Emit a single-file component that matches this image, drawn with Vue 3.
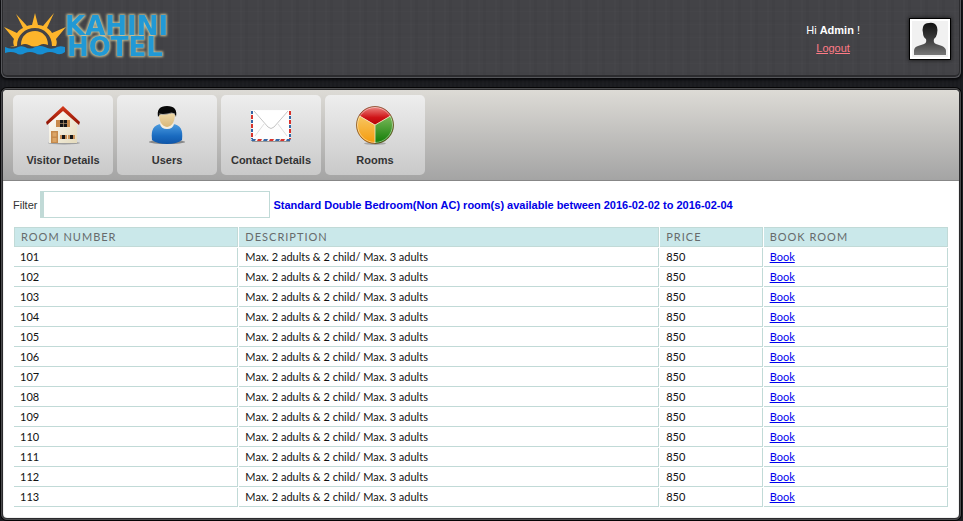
<script setup>
import { ref, computed } from 'vue'

const filter = ref('')
const rooms = Array.from({ length: 13 }, (_, i) => ({
  number: 101 + i,
  description: 'Max. 2 adults & 2 child/ Max. 3 adults',
  price: 850
}))
const shown = computed(() =>
  rooms.filter(r => `${r.number} ${r.description} ${r.price}`.toLowerCase().includes(filter.value.toLowerCase()))
)
</script>

<template>
  <div class="page">
    <header class="top">
      <a class="brand" href="#" aria-label="Kahini Hotel">
        <svg width="176" height="58" viewBox="0 0 176 58">
          <defs>
            <filter id="glow" x="-10%" y="-20%" width="120%" height="140%" color-interpolation-filters="sRGB">
              <feMorphology in="SourceAlpha" operator="dilate" radius="1" />
              <feGaussianBlur stdDeviation="1" result="b" />
              <feFlood flood-color="#c4c09a" />
              <feComposite in2="b" operator="in" result="g" />
              <feMerge><feMergeNode in="g" /><feMergeNode in="SourceGraphic" /></feMerge>
            </filter>
          </defs>
          <g transform="translate(-1 0)">
            <path fill="#fdb52b" d="M10 39 L9 39 L13 38 C12 35 12 33 13 31 L3 19 L16 25 C18 22 20 21 22 20 L15 6 L26 18 C28 17 30 17 31 17 L34 5 L37 17 C38 17 40 17 42 18 L53 5 L46 20 C48 21 50 23 51 25 L65 19 L55 31 C56 33 56 36 55 38 L51 38 C51 27 43 20 34 20 C24 20 16 27 16 38 Z" />
            <path fill="#fdb52b" d="M20 37 C20 28 26 23 34 23 C41 23 47 28 47 37 Q42 35 39 37 Q33 40 28 37 Q24 35 20 37 Z" />
            <path fill="#178fd3" d="M4 39 Q10 42 15 40 Q19 37 24 39 Q29 42 34 39 Q39 37 44 39 Q49 42 54 40 Q58 37 64 39 L64 44 Q59 48 54 45 Q49 43 44 45 Q39 48 34 45 Q29 43 24 45 Q19 48 15 45 Q10 43 4 45 Z" />
          </g>
          <g class="logo-text" filter="url(#glow)">
            <text x="63" y="27">KAHINI</text>
            <text x="65" y="48">HOTEL</text>
          </g>
        </svg>
      </a>
      <div class="account">
        <p class="greet">Hi <b>Admin</b> !<br /><a href="#">Logout</a></p>
        <svg class="avatar" width="42" height="42" viewBox="0 0 42 42" role="img" aria-label="Admin">
          <defs>
            <linearGradient id="man" x1="0" y1="0" x2="0" y2="1">
              <stop offset="0" stop-color="#111" />
              <stop offset=".6" stop-color="#444" />
              <stop offset="1" stop-color="#777" />
            </linearGradient>
          </defs>
          <rect width="42" height="42" fill="#000" />
          <rect x="1" y="1" width="40" height="40" fill="#fff" />
          <rect x="3" y="3" width="36" height="36" fill="#f1f1f1" />
          <path fill="url(#man)" d="M5 37 V33 Q5 29 9 28 L15 26 Q18 25 17 21 Q14 19 14 15 Q13 12 14 9 Q15 5 20 5 Q26 4 28 9 Q29 12 28 16 Q27 20 25 21 Q24 25 27 26 L33 28 Q37 30 37 33 V37 Z" />
        </svg>
      </div>
    </header>

    <main class="panel">
      <nav class="nav">
        <a class="tile" href="#">
          <svg width="40" height="40" viewBox="0 0 40 40">
            <defs>
              <linearGradient id="wall" x1="0" y1="0" x2="1" y2="1">
                <stop offset="0" stop-color="#fff" /><stop offset="1" stop-color="#e4dabb" />
              </linearGradient>
              <linearGradient id="roof" x1="0" y1="0" x2="0" y2="1">
                <stop offset="0" stop-color="#d63a1c" /><stop offset="1" stop-color="#8d1405" />
              </linearGradient>
            </defs>
            <ellipse cx="21" cy="38" rx="16" ry="1.500" fill="#777" opacity=".6" />
            <path d="M6 16 L20 4 L34 16 V38 H6 Z" fill="url(#wall)" />
            <path d="M20 1 L37 17 L36 20 L20 6 L4 20 L3 17 Z" fill="url(#roof)" />
            <path d="M13 15 h14 v7 h-14z" fill="#c88a4b" />
            <path d="M17 15 h7 v7 h-7z" fill="#151515" />
            <path d="M20.500 15v7M17 18.500h7" stroke="#c9a77b" stroke-width=".6" />
            <path d="M8 26 h7 v12 h-7z" fill="#c58a4c" />
            <path d="M9.500 27.500h4v4h-4zM9.500 33h4v4h-4z" fill="#dba566" />
            <path d="M17 30h7v4h-7zM25 30h7v4h-7z" fill="#cb9157" />
            <path d="M19 30h3v4h-3zM27 30h3v4h-3z" fill="#151515" />
          </svg>
          <span>Visitor Details</span>
        </a>
        <a class="tile" href="#">
          <svg width="40" height="40" viewBox="0 0 40 40">
            <defs>
              <linearGradient id="shirt" x1="0" y1="0" x2="0" y2="1">
                <stop offset="0" stop-color="#4b9bdf" /><stop offset=".6" stop-color="#1a6bc0" /><stop offset="1" stop-color="#0e55a8" />
              </linearGradient>
              <linearGradient id="face" x1="0" y1="0" x2="0" y2="1">
                <stop offset="0" stop-color="#efd9a8" /><stop offset="1" stop-color="#d8b778" />
              </linearGradient>
            </defs>
            <ellipse cx="20" cy="37" rx="18" ry="2" fill="#555" opacity=".6" />
            <path d="M5 35 Q3 20 14 19 H26 Q37 20 35 35 Q30 39 20 39 Q10 39 5 35Z" fill="url(#shirt)" />
            <path d="M13 19 Q14 24 20 24 Q26 24 27 19 L24 17 H16Z" fill="#f4eee0" />
            <path d="M12 8 Q12 21 20 22 Q28 21 28 8Z" fill="url(#face)" />
            <path d="M11 12 Q9 1 20 1 Q31 1 29 12 Q28 8 25 8 Q20 10 14 9 Q12 10 11 12Z" fill="#080808" />
            <path d="M12 9 Q16 10 20 9 Q25 7 28 9" fill="none" stroke="#aaa" stroke-width=".8" />
          </svg>
          <span>Users</span>
        </a>
        <a class="tile" href="#">
          <svg width="40" height="40" viewBox="0 0 40 40">
            <path d="M1 36 H39" stroke="#555" stroke-width="2" opacity=".5" />
            <rect x="0" y="5" width="40" height="31" fill="#f6f6f6" />
            <path d="M1 10V34M39 6V34" stroke="#d8322b" stroke-width="2" stroke-dasharray="4 5" />
            <path d="M1 6V34M39 11V34" stroke="#3467a5" stroke-width="2" stroke-dasharray="3 6" />
            <path d="M0 36l1-2h4l-1 2zM12 36l1-2h4l-1 2zM24 36l1-2h4l-1 2zM35 36l1-2h4l-1 2z" fill="#3467a5" />
            <path d="M6 36l1-2h4l-1 2zM18 36l1-2h4l-1 2zM29 36l1-2h4l-1 2z" fill="#d8322b" />
            <rect x="2" y="5" width="36" height="29" fill="#fdfdfd" />
            <path d="M4 31 L13 19 M27 19 L36 31" fill="none" stroke="#ddd" />
            <path d="M3 6 L17 22 Q20 25 23 22 L37 6" fill="#fff" stroke="#c4c4c4" />
          </svg>
          <span>Contact Details</span>
        </a>
        <a class="tile" href="#">
          <svg width="40" height="40" viewBox="0 0 40 40">
            <defs>
              <linearGradient id="red" x1="0" y1="0" x2="0" y2="1">
                <stop offset="0" stop-color="#ee8a84" /><stop offset=".6" stop-color="#cf1418" /><stop offset="1" stop-color="#b40006" />
              </linearGradient>
              <linearGradient id="orange" x1="0" y1="0" x2="0" y2="1">
                <stop offset="0" stop-color="#f7c763" /><stop offset="1" stop-color="#f59a0b" />
              </linearGradient>
              <linearGradient id="green" x1="0" y1="0" x2="0" y2="1">
                <stop offset="0" stop-color="#7bb95a" /><stop offset="1" stop-color="#107c05" />
              </linearGradient>
            </defs>
            <ellipse cx="20" cy="38.500" rx="11" ry="1.500" fill="#777" opacity=".5" />
            <path d="M20 20 L4 10.500 A18.500 18.500 0 0 1 36 10.500Z" fill="url(#red)" />
            <path d="M20 20 V38.500 A18.500 18.500 0 0 1 4 10.500Z" fill="url(#orange)" />
            <path d="M20 20 L36 10.500 A18.500 18.500 0 0 1 20 38.500Z" fill="url(#green)" />
            <path d="M20 38V20L4.500 11M20 20l15.500-9" fill="none" stroke="#f6e6c8" stroke-width=".8" />
            <circle cx="20" cy="20" r="17.500" fill="none" stroke="#fff" stroke-opacity=".45" />
            <circle cx="20" cy="20" r="18.500" fill="none" stroke="#6b3c14" stroke-opacity=".65" />
          </svg>
          <span>Rooms</span>
        </a>
      </nav>

      <section class="content">
        <form class="filter" @submit.prevent>
          <label for="filter">Filter</label>
          <input id="filter" v-model="filter" type="text" />
          <strong>Standard Double Bedroom(Non AC) room(s) available between 2016-02-02 to 2016-02-04</strong>
        </form>
        <table>
          <colgroup>
            <col class="c-number" /><col class="c-desc" /><col class="c-price" /><col />
          </colgroup>
          <thead>
            <tr><th>Room Number</th><th>Description</th><th>Price</th><th>Book Room</th></tr>
          </thead>
          <tbody>
            <tr v-for="r in shown" :key="r.number">
              <td>{{ r.number }}</td>
              <td>{{ r.description }}</td>
              <td>{{ r.price }}</td>
              <td><a href="#">Book</a></td>
            </tr>
          </tbody>
        </table>
      </section>
    </main>
  </div>
</template>

<style>
body {
  margin: 0;
  background: repeating-linear-gradient(90deg, #1a1b1f 0 2px, #1d1e22 2px 4px);
}
</style>

<style scoped>
.page {
  padding: 0 2px 1px 1px;
  font: 11px/18px "Liberation Sans", Arial, sans-serif;
  color: #333;
}
.top {
  display: flex;
  justify-content: space-between;
  align-items: flex-start;
  box-sizing: border-box;
  min-height: 78px;
  padding: 8px 9px 8px 0;
  border: 1px solid #55565a;
  border-top: 0;
  border-radius: 0 0 6px 6px;
  background:
    repeating-linear-gradient(90deg, rgba(255, 255, 255, .01) 0 2px, transparent 2px 5px, rgba(0, 0, 0, .03) 5px 8px, transparent 8px 17px),
    repeating-linear-gradient(0deg, rgba(255, 255, 255, .01) 0 1px, transparent 1px 3px, rgba(0, 0, 0, .02) 3px 5px, transparent 5px 13px),
    #434347;
  box-shadow: inset 0 -1px 0 1px #2b2b2e, 0 1px 3px 1px #08080a;
}
.brand { display: block; }
.brand svg { display: block; }
.logo-text {
  font: bold 26px "DejaVu Sans", sans-serif;
  fill: #2199d5;
}
.account {
  display: flex;
  gap: 49px;
  padding-top: 10px;
}
.greet {
  margin: 3px 0 0;
  text-align: center;
  color: #fff;
}
.greet a { color: #ff7b86; }
.avatar { display: block; box-shadow: 0 0 4px #111; }
.panel {
  margin-top: 10px;
  border: 2px solid #2b2b2d;
  border-radius: 6px;
  background: #fff;
  box-shadow: 0 0 0 1px #050506, inset 0 0 1px #666;
  outline: 1px solid #4c4c4e;
  outline-offset: -1px;
  overflow: hidden;
}
.nav {
  display: flex;
  gap: 4px;
  padding: 5px 10px;
  border-bottom: 1px solid #878787;
  background: linear-gradient(#dddbd6, #a4a4a4);
}
.tile {
  display: flex;
  flex-direction: column;
  align-items: center;
  gap: 6px;
  box-sizing: border-box;
  width: 100px;
  height: 80px;
  padding-top: 10px;
  border-radius: 5px;
  background: linear-gradient(#eee, #c9c9c9);
  color: #333;
  font-weight: bold;
  text-decoration: none;
}
.content { padding: 10px; }
.filter {
  display: flex;
  align-items: center;
  gap: 3px;
  margin-bottom: 8px;
}
.filter input {
  box-sizing: border-box;
  width: 230px;
  height: 27px;
  padding: 4px;
  border: 1px solid #c1dad7;
  border-left-width: 4px;
  font: inherit;
}
.filter strong { color: #0000e6; }
table {
  width: 100%;
  table-layout: fixed;
  border-spacing: 1px;
  font: 11px/14px "Trebuchet MS", Lato, "Open Sans", sans-serif;
  color: #111;
}
.c-number { width: 24.1%; }
.c-desc { width: 45.1%; }
.c-price { width: 11%; }
th, td {
  padding: 2px 6px;
  border: solid #c1dad7;
  border-width: 0 1px 1px 0;
  text-align: left;
}
th {
  border-top-width: 1px;
  background: #cae8ea;
  color: #666b6c;
  font-weight: normal;
  letter-spacing: 1px;
  text-transform: uppercase;
}
th:first-child { border-left-width: 1px; }
td a { color: #00e; }
</style>
